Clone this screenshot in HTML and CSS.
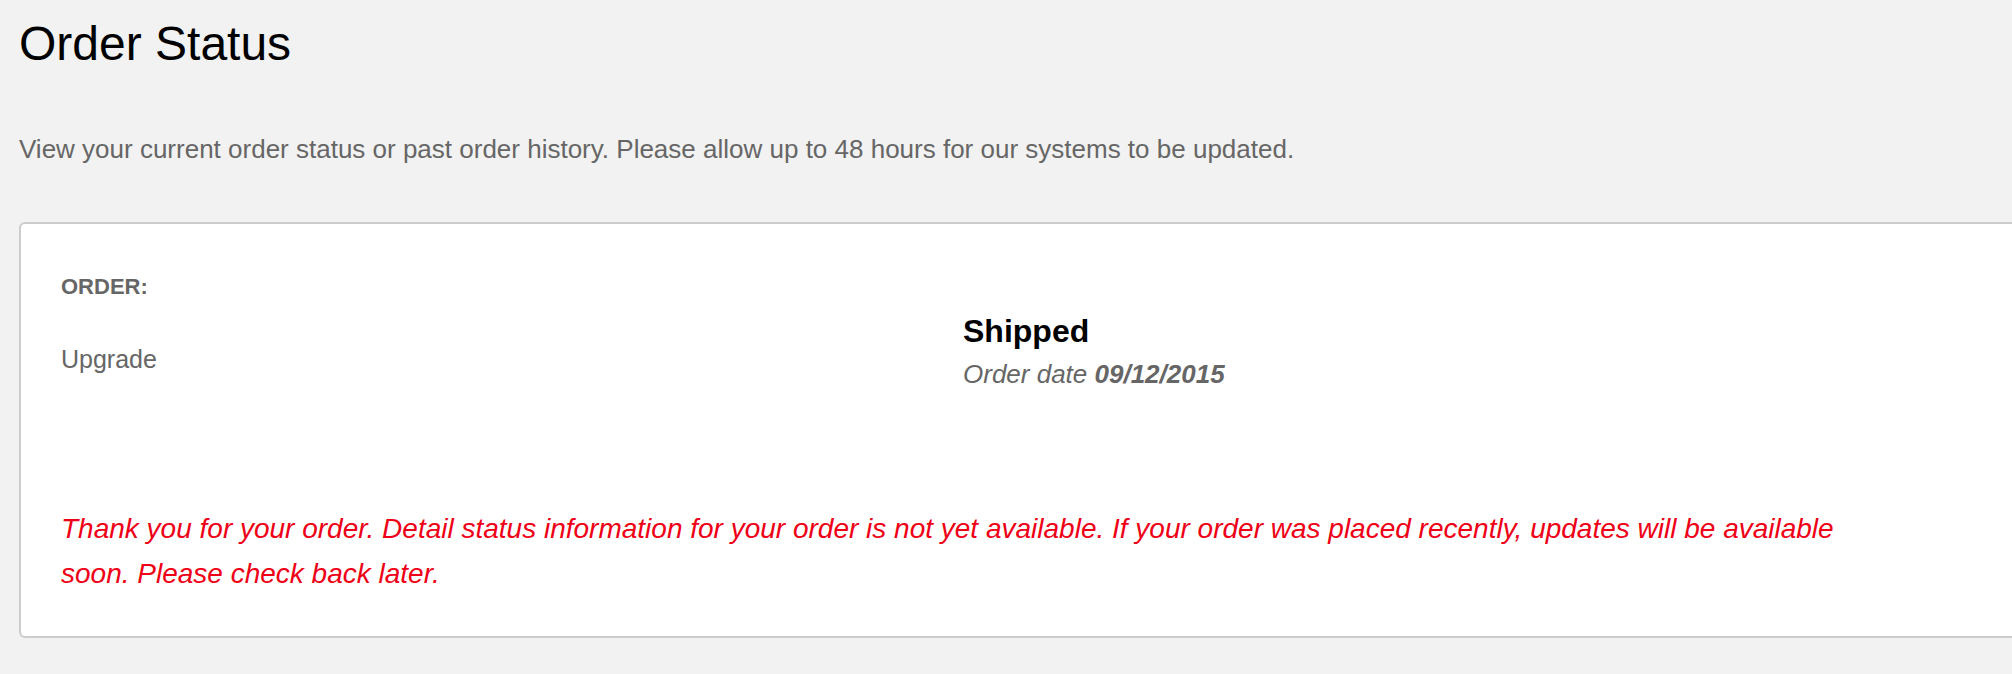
FILE: index.html
```html
<!DOCTYPE html>
<html lang="en">
<head>
<meta charset="utf-8">
<title>Order Status</title>
<link rel="stylesheet" href="styles.css">
</head>
<body>
<main class="page">
  <h1 class="title">Order Status</h1>
  <p class="intro">View your current order status or past order history. Please allow up to 48 hours for our systems to be updated.</p>
  <section class="card">
    <div class="cols">
      <div class="col-left">
        <div class="label">ORDER:</div>
        <div class="order-name">Upgrade</div>
      </div>
      <div class="col-right">
        <div class="status">Shipped</div>
        <div class="date">Order date <b>09/12/2015</b></div>
      </div>
    </div>
    <p class="notice">Thank you for your order. Detail status information for your order is not yet available. If your order was placed recently, updates will be available soon. Please check back later.</p>
  </section>
</main>
</body>
</html>
```
FILE: styles.css
```css
html, body {
  margin: 0;
  padding: 0;
  background: #f2f2f2;
  overflow: hidden;
}
body {
  font-family: "Liberation Sans", Arial, Helvetica, sans-serif;
}
.page {
  padding: 15px 0 0 19px;
}
.title {
  margin: 0;
  font-size: 48px;
  line-height: 58px;
  font-weight: normal;
  color: #000;
}
.intro {
  margin: 58px 0 0 0;
  font-size: 26px;
  line-height: 36px;
  color: #666;
}
.card {
  margin: 55px -40px 0 0;
  background: #fff;
  border: 2px solid #cccccc;
  border-radius: 6px;
  padding: 50px 41px 40px 40px;
}
.cols {
  display: grid;
  grid-template-columns: 902px 1fr;
}
.label {
  font-size: 22px;
  line-height: 26px;
  font-weight: bold;
  color: #666;
}
.order-name {
  margin-top: 44px;
  font-size: 25px;
  line-height: 30px;
  color: #666;
}
.col-right {
  padding-top: 38px;
}
.status {
  font-size: 32px;
  line-height: 38px;
  font-weight: bold;
  color: #000;
}
.date {
  margin-top: 8px;
  font-size: 26px;
  line-height: 32px;
  font-style: italic;
  color: #666;
}
.date b {
  font-weight: bold;
}
.notice {
  margin: 117px 0 0 0;
  max-width: 1800px;
  font-size: 28px;
  line-height: 44.5px;
  font-style: italic;
  color: #ee0016;
}
```
